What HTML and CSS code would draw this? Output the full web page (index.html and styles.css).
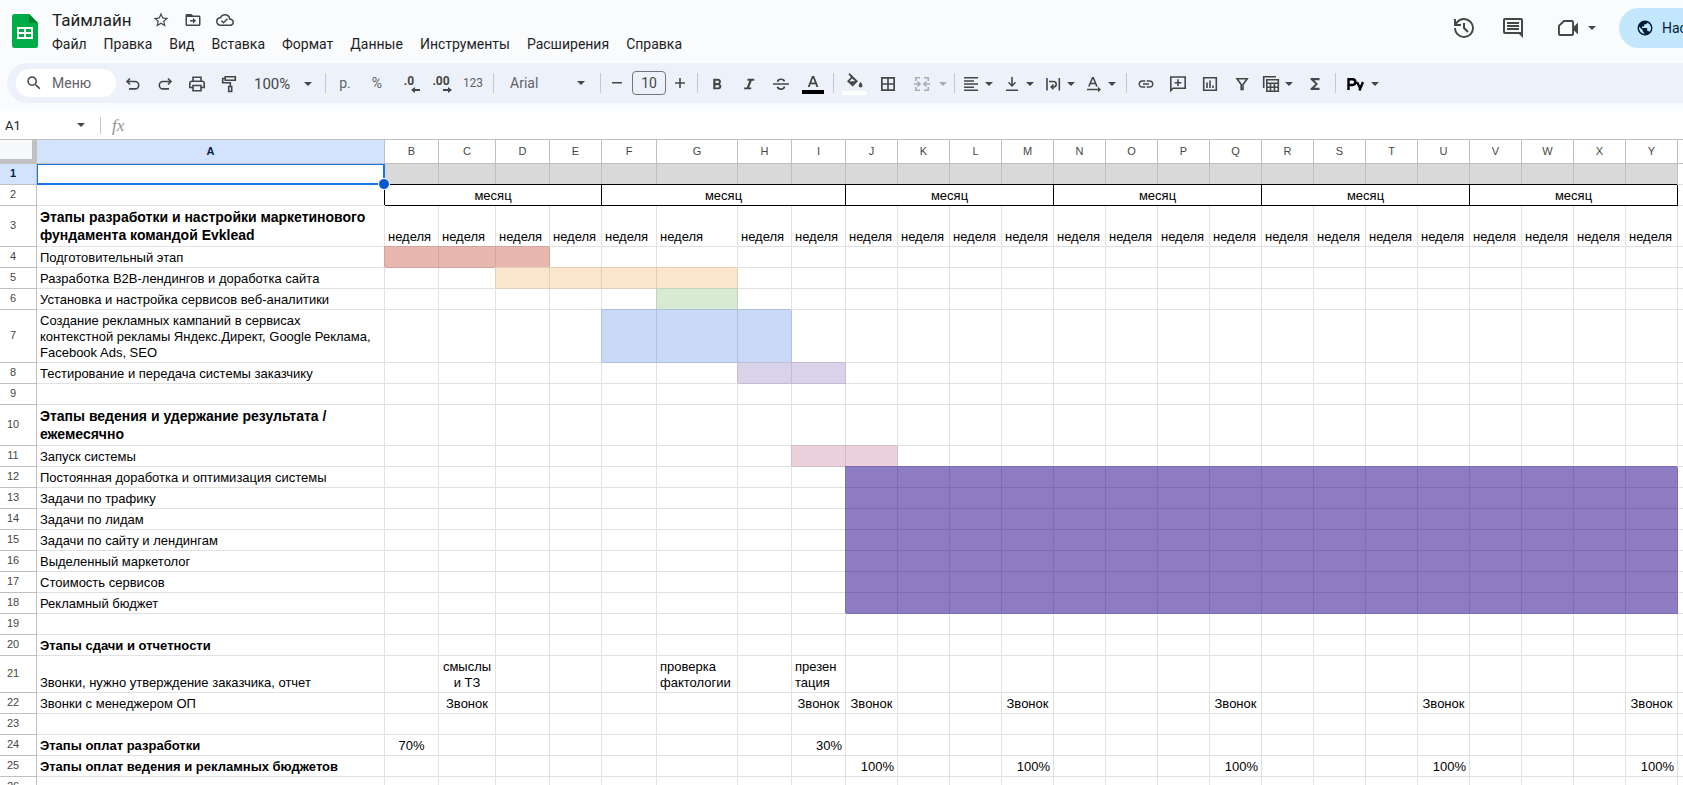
FILE: index.html
```html
<!DOCTYPE html>
<html lang="ru">
<head>
<meta charset="utf-8">
<title>Таймлайн</title>
<link rel="stylesheet" href="styles.css">
</head>
<body>
<div class="app">
  <header class="header">
    <svg class="logo" width="26" height="34" viewBox="0 0 26 34"><path fill="#00ac47" d="M2.500 0H17l9 9v22.500a2.500 2.500 0 0 1-2.500 2.500h-21A2.500 2.500 0 0 1 0 31.500v-29A2.500 2.500 0 0 1 2.500 0z"/><path fill="#00832d" d="M17 0l9 9h-9z"/><path fill="#fff" fill-rule="evenodd" d="M5 13h16v12H5zM7 15v3h5v-3zM14 15v3h5v-3zM7 20v3h5v-3zM14 20v3h5v-3z"/></svg>
    <div class="doc">
      <div class="doc-row">
        <h1 class="title">Таймлайн</h1>
        <button class="doc-btn" aria-label="Пометить"><svg class="i18" viewBox="0 0 24 24"><path d="M22 9.240l-7.190-.62L12 2 9.190 8.630 2 9.240l5.460 4.730L5.820 21 12 17.270 18.180 21l-1.630-7.030L22 9.240zM12 15.400l-3.760 2.270 1-4.280-3.320-2.880 4.380-.38L12 6.100l1.710 4.040 4.380.38-3.320 2.880 1 4.280L12 15.400z"/></svg></button>
        <button class="doc-btn" aria-label="Переместить"><svg class="i18" viewBox="0 0 24 24"><path d="M20 6h-8l-2-2H4c-1.100 0-2 .9-2 2v12c0 1.100.9 2 2 2h16c1.100 0 2-.9 2-2V8c0-1.100-.9-2-2-2zm0 12H4V8h16v10zm-8-1l4-4-4-4v3H8v2h4v3z"/></svg></button>
        <button class="doc-btn" aria-label="Статус документа"><svg class="i18" viewBox="0 0 24 24"><path d="M19.350 10.040A7.490 7.490 0 0 0 12 4C9.110 4 6.600 5.640 5.350 8.040A5.994 5.994 0 0 0 0 14c0 3.310 2.690 6 6 6h13c2.760 0 5-2.240 5-5 0-2.640-2.050-4.780-4.650-4.960zM19 18H6c-2.210 0-4-1.790-4-4 0-2.050 1.530-3.760 3.560-3.970l1.070-.11.5-.95A5.469 5.469 0 0 1 12 6c2.620 0 4.880 1.860 5.390 4.430l.3 1.500 1.530.11A2.980 2.980 0 0 1 22 15c0 1.650-1.350 3-3 3zm-9-3.820l-2.090-2.090L6.500 13.500 10 17l6.010-6.010-1.410-1.410z"/></svg></button>
      </div>
      <nav class="menu">
        <button>Файл</button><button>Правка</button><button>Вид</button><button>Вставка</button><button>Формат</button><button>Данные</button><button>Инструменты</button><button>Расширения</button><button>Справка</button>
      </nav>
    </div>
    <div class="actions">
      <button class="action" aria-label="История"><svg class="i24" viewBox="0 0 24 24"><path d="M12 2a10 10 0 0 0-8 4V3H2v7h7V8H5.080A8 8 0 1 1 4 12H2A10 10 0 1 0 12 2zm-1 5v5.400l4.300 4.300 1.400-1.400-3.700-3.700V7z"/></svg></button>
      <button class="action" aria-label="Комментарии"><svg class="i24" viewBox="0 0 24 24"><path d="M4 2h16a2 2 0 0 1 2 2v18l-4-4H4a2 2 0 0 1-2-2V4c0-1.100.9-2 2-2zm0 2v12h16V4zm2 8h12v2H6zm0-3h12v2H6zm0-3h12v2H6z"/></svg></button>
      <button class="action meet" aria-label="Видеовстреча"><svg class="i24" viewBox="0 0 24 24"><path fill-rule="evenodd" d="M7.500 4H16a2 2 0 0 1 2 2v4.500l4-4v12l-4-4V18a2 2 0 0 1-2 2H4a2 2 0 0 1-2-2V9.500zM8.300 5.900L3.900 10.300v7.800h12.200V5.900z"/></svg><i class="caret"></i></button>
      <div class="share-slot"><button class="share"><svg class="i18" viewBox="0 0 24 24"><path d="M12 2a10 10 0 1 0 0 20 10 10 0 0 0 0-20zm-1 17.930A7.990 7.990 0 0 1 4 12c0-.62.080-1.210.21-1.790L9 15v1c0 1.100.9 2 2 2v1.930zm6.900-2.540A1.990 1.990 0 0 0 16 16h-1v-3c0-.55-.45-1-1-1H8v-2h2c.55 0 1-.45 1-1V7h2c1.100 0 2-.9 2-2v-.41a7.984 7.984 0 0 1 2.900 12.800z"/></svg>Настройки доступа</button></div>
    </div>
  </header>

  <div class="toolbar">
    <label class="search"><svg class="i18" viewBox="0 0 24 24"><path d="M15.500 14h-.79l-.28-.27A6.470 6.470 0 0 0 16 9.500 6.500 6.500 0 1 0 9.500 16c1.610 0 3.090-.59 4.230-1.570l.27.28v.79l5 4.990L20.490 19l-4.990-5zm-6 0C7.010 14 5 11.990 5 9.500S7.010 5 9.500 5 14 7.010 14 9.500 11.990 14 9.500 14z"/></svg><input type="text" placeholder="Меню" aria-label="Меню"></label>
    <button class="tb" aria-label="Отменить"><svg class="i18" viewBox="0 0 18 18"><path d="M6 3.500L3 6.500l3 3M3.500 6.500H11a3.700 3.700 0 0 1 0 7.400H5" class="stroke"/></svg></button>
    <button class="tb" aria-label="Повторить"><svg class="i18" viewBox="0 0 18 18"><path d="M12 3.500l3 3-3 3M14.500 6.500H7a3.700 3.700 0 0 0 0 7.400h6" class="stroke"/></svg></button>
    <button class="tb" aria-label="Печать"><svg class="i18" viewBox="0 0 18 18"><path d="M5 5.700V2.300h8v3.400M4.500 12.500H1.800V8.200a2 2 0 0 1 2-2h10.400a2 2 0 0 1 2 2v4.300h-2.700M5 10.500h8v5.200H5z" class="stroke"/></svg></button>
    <button class="tb" aria-label="Копировать форматирование"><svg class="i18" viewBox="0 0 18 18"><path d="M5.200 1.700h10.100v3.600H5.200zM5 3.500H2.700v4.300h7.600V11M8.700 11.500h3v5h-3z" class="stroke"/></svg></button>
    <button class="zoom">100%<i class="caret"></i></button>
    <span class="sep"></span>
    <button class="tb light">р.</button>
    <button class="tb light">%</button>
    <button class="tb dec">.0<svg width="9" height="6" viewBox="0 0 9 6"><path d="M4 0v2h5v2H4v2L0 3z"/></svg></button>
    <button class="tb dec">.00<svg width="9" height="6" viewBox="0 0 9 6"><path d="M5 0v2H0v2h5v2l4-3z"/></svg></button>
    <button class="tb num">123</button>
    <span class="sep"></span>
    <button class="font">Arial<i class="caret"></i></button>
    <span class="sep"></span>
    <button class="step" aria-label="Уменьшить"><svg width="10" height="10" viewBox="0 0 10 10"><path d="M0 4h10v1.600H0z"/></svg></button>
    <input class="size" value="10" aria-label="Размер шрифта">
    <button class="step" aria-label="Увеличить"><svg width="10" height="10" viewBox="0 0 10 10"><path d="M0 4.200h4.200V0h1.600v4.200H10v1.600H5.800V10H4.200V5.800H0z"/></svg></button>
    <span class="sep"></span>
    <button class="tb" aria-label="Полужирный"><svg class="i18" viewBox="0 0 24 24"><path d="M15.600 11.790c.97-.67 1.650-1.770 1.650-2.790 0-2.260-1.750-4-4-4H7v14h7.040c2.090 0 3.710-1.700 3.710-3.790 0-1.520-.86-2.820-2.150-3.420zM10 7.500h3c.83 0 1.500.67 1.500 1.500s-.67 1.500-1.500 1.500h-3v-3zm3.500 9H10v-3h3.500c.83 0 1.500.67 1.500 1.500s-.67 1.500-1.500 1.500z"/></svg></button>
    <button class="tb" aria-label="Курсив"><svg class="i18" viewBox="0 0 24 24"><path d="M10 5v2.500h2.500L9 16.500H5.500V19H15v-2.500h-2.800l3.500-9H19V5z"/></svg></button>
    <button class="tb" aria-label="Зачеркнутый"><svg class="i18" viewBox="0 0 18 18"><path d="M1 8.200h16v1.600H1zM4.800 6.700c0-2 1.700-3.200 4.200-3.200 2.300 0 3.900 1.100 4.200 2.700l-1.800.4c-.3-.9-1.100-1.500-2.400-1.500-1.300 0-2.200.6-2.200 1.600zM4.600 12l1.800-.4c.3 1.100 1.200 1.700 2.700 1.700 1.400 0 2.300-.6 2.300-1.800h1.900c0 2.200-1.700 3.500-4.200 3.500-2.600 0-4.200-1.200-4.500-3z"/></svg></button>
    <button class="tb" aria-label="Цвет текста"><svg width="24" height="20" viewBox="0 0 24 20"><path d="M11 2h2.200l4.200 11h-2l-1-2.800H9.700l-1 2.800h-2zm-.7 6.600h3.500L12.100 4z"/><path fill="#000" d="M1 16h22v4H1z"/></svg></button>
    <span class="sep"></span>
    <button class="tb wide" aria-label="Цвет заливки"><svg width="24" height="22" viewBox="0 0 24 22"><path d="M6.500 1.200L7.600 0l8.400 8.300-5.300 5.200L5 8.300l3.900-4zM10 5.500L7.300 8.200h6zM18.500 9s2 2.200 2 3.500a1.900 1.900 0 0 1-3.800 0c0-1.300 1.800-3.500 1.800-3.500z"/><path fill="#fff" d="M0 18h24v4H0z"/></svg></button>
    <button class="tb wide" aria-label="Границы"><svg class="i18" viewBox="0 0 18 18"><path fill-rule="evenodd" d="M2 2h14v14H2zM3.700 3.700v4.500h4.500V3.700zM9.800 3.700v4.500h4.500V3.700zM3.700 9.800v4.500h4.500V9.800zM9.800 9.800v4.500h4.500V9.800z"/></svg></button>
    <button class="merge" disabled aria-label="Объединить ячейки"><svg class="i18" viewBox="0 0 18 18"><path d="M7 2.700H2.700V6M11 2.700h4.300V6M7 15.300H2.700V12M11 15.300h4.300V12M1 9h5M4.500 6.500L7 9l-2.500 2.500M17 9h-5M13.500 6.500L11 9l2.500 2.500" class="stroke"/></svg><i class="caret"></i></button>
    <span class="sep"></span>
    <button class="drop" aria-label="Выравнивание по горизонтали"><svg class="i18" viewBox="0 0 18 18"><path d="M2 2h14v1.500H2zM2 5.200h10v1.500H2zM2 8.300h14v1.500H2zM2 11.400h10v1.500H2zM2 14.500h14V16H2z"/></svg><i class="caret"></i></button>
    <button class="drop" aria-label="Выравнивание по вертикали"><svg class="i18" viewBox="0 0 18 18"><path d="M3 14.500h12V16H3zM8.200 2h1.600v7l2.200-2.200 1 1L9 12 5 7.800l1-1L8.200 9z"/></svg><i class="caret"></i></button>
    <button class="drop" aria-label="Перенос текста"><svg class="i18" viewBox="0 0 18 18"><path d="M3 3v12.500M15.300 3v12.500M5 6.500h4.500a2.700 2.700 0 0 1 0 5.400H7.500M9.500 9.500L7.200 11.900l2.300 2.400" class="stroke"/></svg><i class="caret"></i></button>
    <button class="drop" aria-label="Поворот текста"><svg class="i18" viewBox="0 0 18 18"><path d="M7 2h1.800l4 9.500H11l-.9-2.300H5.700l-.9 2.300H3zm-.7 5.700h3.200L7.900 3.800zM2 13.700h11v-2l3 2.800-3 2.800v-2H2z"/></svg><i class="caret"></i></button>
    <span class="sep"></span>
    <button class="tb" aria-label="Ссылка"><svg class="i18" viewBox="0 0 24 24"><path d="M3.900 12c0-1.710 1.390-3.100 3.100-3.100h4V7H7c-2.760 0-5 2.240-5 5s2.240 5 5 5h4v-1.900H7c-1.710 0-3.100-1.390-3.100-3.100zM8 13h8v-2H8v2zm9-6h-4v1.900h4c1.710 0 3.100 1.390 3.100 3.100s-1.390 3.100-3.100 3.100h-4V17h4c2.760 0 5-2.240 5-5s-2.240-5-5-5z"/></svg></button>
    <button class="tb" aria-label="Комментарий"><svg class="i18" viewBox="0 0 18 18"><path d="M1.800 15.500V2h14.400v11.300H4zM9 4.300v6.800M5.600 7.700h6.800" class="stroke"/></svg></button>
    <button class="tb" aria-label="Диаграмма"><svg class="i18" viewBox="0 0 18 18"><path d="M2.700 2.700h12.600v12.600H2.700zM6 7.500V13M9 5.500V13M12 10.500V13" class="stroke"/></svg></button>
    <button class="tb" aria-label="Фильтр"><svg class="i18" viewBox="0 0 18 18"><path d="M4 3.800h10.200L10 9.500V14.500H8.200V9.500z" class="stroke"/></svg></button>
    <button class="drop" aria-label="Таблица"><svg class="i18" viewBox="0 0 18 18"><path d="M1.700 13V1.700H14M4.800 4.700h11.500v11.600H4.800zM5 8.300h11M5 12.300h11M8.500 8.500V16M12.400 8.500V16" class="stroke"/></svg><i class="caret"></i></button>
    <button class="tb" aria-label="Функции"><svg class="i18" viewBox="0 0 24 24"><path d="M18 4H6v2l6.500 6L6 18v2h12v-3h-7l5-5-5-5h7z"/></svg></button>
    <span class="sep"></span>
    <button class="py" aria-label="Python"><svg width="17" height="14" viewBox="0 0 17 14"><path fill="none" stroke="#000" stroke-width="2.400" d="M1.500 13V2.200h4a2.900 2.900 0 0 1 0 5.800h-4M10 5l3 6M16 5l-3.600 8.500"/></svg><i class="caret"></i></button>
  </div>

  <div class="formula">
    <input class="name" value="A1" aria-label="Имя ячейки"><i class="caret"></i>
    <span class="fsep"></span>
    <label class="fx" for="fx">fx</label><input class="fx-input" id="fx">
  </div>

  <table class="sheet" id="sheet"></table>
</div>
<script src="sheet.js"></script>
</body>
</html>
```
FILE: sheet.js
```js
const letters = 'ABCDEFGHIJKLMNOPQRSTUVWXY'.split('');
const widths = [348, 54, 57, 54, 52, 55, 81, 54, 54];

const rows = [
  { fill: ['B', 'Y', 'grey'] },
  { months: true },
  { a: 'Этапы разработки и настройки маркетинового<br>фундамента командой Evklead', cls: 'big', h: 'h41', weeks: true },
  { a: 'Подготовительный этап', fill: ['B', 'D', 'red'] },
  { a: 'Разработка B2B-лендингов и доработка сайта', fill: ['D', 'G', 'orange'] },
  { a: 'Установка и настройка сервисов веб-аналитики', fill: ['G', 'G', 'green'] },
  { a: 'Создание рекламных кампаний в сервисах<br>контекстной рекламы Яндекс.Директ, Google Реклама,<br>Facebook Ads, SEO', h: 'h53', fill: ['F', 'H', 'blue'] },
  { a: 'Тестирование и передача системы заказчику', fill: ['H', 'I', 'lilac'] },
  {},
  { a: 'Этапы ведения и удержание результата /<br>ежемесячно', cls: 'big', h: 'h41' },
  { a: 'Запуск системы', fill: ['I', 'J', 'pink'] },
  { a: 'Постоянная доработка и оптимизация системы', fill: ['J', 'Y', 'violet'] },
  { a: 'Задачи по трафику', fill: ['J', 'Y', 'violet'] },
  { a: 'Задачи по лидам', fill: ['J', 'Y', 'violet'] },
  { a: 'Задачи по сайту и лендингам', fill: ['J', 'Y', 'violet'] },
  { a: 'Выделенный маркетолог', fill: ['J', 'Y', 'violet'] },
  { a: 'Стоимость сервисов', fill: ['J', 'Y', 'violet'] },
  { a: 'Рекламный бюджет', fill: ['J', 'Y', 'violet'] },
  {},
  { a: 'Этапы сдачи и отчетности', cls: 'bold' },
  { a: 'Звонки, нужно утверждение заказчика, отчет', h: 'h37', text: { C: 'смыслы<br>и ТЗ', G: 'проверка<br>фактологии', I: 'презен<br>тация' }, align: { C: 'center' } },
  { a: 'Звонки с менеджером ОП', text: { C: 'Звонок', I: 'Звонок', J: 'Звонок', M: 'Звонок', Q: 'Звонок', U: 'Звонок', Y: 'Звонок' }, all: 'center' },
  {},
  { a: 'Этапы оплат разработки', cls: 'bold', text: { B: '70%', I: '30%' }, align: { B: 'center', I: 'right' } },
  { a: 'Этапы оплат ведения и рекламных бюджетов', cls: 'bold', text: { J: '100%', M: '100%', Q: '100%', U: '100%', Y: '100%' }, all: 'right' },
  {}
];

let html = '<colgroup><col style="width:37px">';
letters.forEach((l, i) => { html += `<col style="width:${widths[i] || 52}px">`; });
html += '<col style="width:100px"></colgroup><thead><tr><th class="corner"></th>';
letters.forEach(l => { html += `<th scope="col"${l === 'A' ? ' class="active"' : ''}>${l}</th>`; });
html += '<th></th></tr></thead><tbody>';

rows.forEach((r, n) => {
  html += `<tr class="${r.h || 'h21'}"><th scope="row"${n === 0 ? ' class="active"' : ''}>${n + 1}</th>`;
  if (n === 0) html += '<td class="selected"><span class="cursor"></span></td>';
  else html += `<td class="${r.cls || ''}">${r.a || ''}</td>`;
  if (r.months) {
    for (let m = 0; m < 6; m++) html += '<td class="month" colspan="4">месяц</td>';
  } else {
    letters.slice(1).forEach(l => {
      const cls = [];
      if (r.fill && l >= r.fill[0] && l <= r.fill[1]) cls.push('fill', r.fill[2]);
      const text = r.weeks ? 'неделя' : (r.text && r.text[l]) || '';
      const align = (r.align && r.align[l]) || (text && r.all);
      if (align) cls.push(align);
      html += `<td class="${cls.join(' ')}">${text}</td>`;
    });
  }
  html += '<td></td></tr>';
});
document.getElementById('sheet').innerHTML = html + '</tbody>';
```
FILE: styles.css
```css
* { box-sizing: border-box; }
html, body { height: 100%; }
body { margin: 0; overflow: hidden; background: #fff; font-family: Roboto, "Liberation Sans", sans-serif; color: #1f1f1f; }
button, input { font: inherit; color: inherit; border: 0; padding: 0; margin: 0; background: none; outline: 0; }
button { display: flex; align-items: center; flex: none; white-space: nowrap; }
svg { display: block; flex: none; fill: #444746; }
.stroke { fill: none; stroke: #444746; stroke-width: 1.6px; }
.i18 { width: 18px; height: 18px; }
.i24 { width: 24px; height: 24px; }
.app { height: 100vh; overflow: hidden; background: #f9fbfd; }
.caret { flex: none; width: 0; height: 0; border: 4px solid transparent; border-top-color: #444746; border-bottom-width: 0; }

.header { display: flex; height: 63px; padding-left: 12px; }
.logo { margin-top: 14px; }
.doc { padding: 7px 0 0 6px; }
.doc-row { display: flex; align-items: center; height: 25px; padding-left: 8px; }
.title { margin: 0 13px 0 0; font-size: 17px; font-weight: 400; line-height: 24px; }
.doc-btn { width: 32px; height: 24px; justify-content: center; }
.menu { display: flex; gap: 1px; font-size: 14px; line-height: 20px; padding-top: 2px; }
.menu button { padding: 0 8px; height: 20px; }
.actions { display: flex; align-items: center; height: 56px; margin-left: auto; }
.action { width: 49px; height: 40px; justify-content: center; }
.meet { width: 82px; gap: 8px; padding-right: 4px; }
.share-slot { width: 64px; }
.share { height: 40px; padding: 0 24px 0 17px; gap: 8px; border-radius: 20px; background: #c2e7ff; color: #001d35; font-size: 14px; }
.share svg { fill: #001d35; }

.toolbar { display: flex; align-items: center; height: 40px; margin-left: 7px; padding-left: 9px; overflow: hidden; background: #edf2fa; border-radius: 20px 0 0 20px; color: #444746; font-size: 14px; }
.search { display: flex; align-items: center; flex: none; width: 100px; height: 28px; margin-right: 1px; padding-left: 9px; gap: 9px; border-radius: 14px; background: #fff; }
.search input { width: 56px; }
.search input::placeholder { color: #5f6368; opacity: 1; }
.tb, .drop, .merge, .py, .zoom { height: 28px; padding-top: 2px; }
.tb { width: 32px; justify-content: center; }
.wide { width: 34px; }
.light, .num { padding-top: 0; color: #5f6368; }
.num { font-size: 12px; }
.dec { position: relative; font-size: 12px; font-weight: 700; padding: 0 0 4px; }
.dec svg { position: absolute; right: 5px; bottom: 4px; }
.zoom { width: 76px; padding-left: 9px; padding-right: 9px; justify-content: space-between; font-size: 15px; }
.font { width: 99px; padding: 0 11px 0 13px; justify-content: space-between; color: #5f6368; }
.sep { flex: none; width: 1px; height: 20px; margin: 0 3px 0 4px; background: #c7c7c7; }
.step { width: 26px; height: 28px; justify-content: center; }
.size { flex: none; width: 34px; height: 24px; margin: 0 1px 0 2px; border: 1px solid #747775; border-radius: 4px; text-align: center; }
.merge { width: 45px; padding-left: 8px; gap: 8px; opacity: .4; }
.drop { width: 41px; padding-left: 4px; gap: 5px; }
.py { width: 48px; padding-left: 8px; gap: 7px; }

.formula { display: flex; align-items: center; height: 28px; margin-top: 8px; background: #fff; font-size: 13px; }
.name { width: 72px; padding-left: 5px; }
.formula .caret { margin: 0 15px 0 5px; }
.fsep { width: 1px; height: 17px; background: #c7c7c7; }
.fx { padding: 2px 8px 0 11px; font: italic 17px "Liberation Serif", serif; color: #8f9193; }
.fx-input { flex: 1; }

.sheet { table-layout: fixed; width: 100%; border-collapse: separate; border-spacing: 0; border-top: 1px solid #c0c0c0; background: #fff; font-family: "Liberation Sans", Arial, sans-serif; font-size: 13px; line-height: 16px; color: #000; }
th { padding: 0 0 2px; border: solid #c0c0c0; border-width: 0 1px 1px 0; font-size: 11px; line-height: 14px; font-weight: 400; color: #444746; background: #fff; vertical-align: middle; }
thead th { height: 24px; }
tbody th { padding-right: 10px; }
th.active { background: #d3e3fd; font-weight: 700; color: #041e49; }
th.corner { background: #f8f9fa; border: solid #c0c0c0; border-width: 0 5px 5px 0; }
td { padding: 0 3px 1px; border: solid #e1e1e1; border-width: 0 1px 1px 0; vertical-align: bottom; white-space: nowrap; overflow: hidden; }
.h21 { height: 21px; }
.h37 { height: 37px; }
.h41 { height: 41px; }
.h53 { height: 53px; }
.bold { font-weight: 700; }
.big { padding-bottom: 2px; font-size: 14px; line-height: 18px; font-weight: 700; }
.center { text-align: center; }
.right { text-align: right; }
.month { text-align: center; border-color: #000; box-shadow: -1px -1px 0 #000; }
.fill { background: var(--bg); border-color: var(--line); box-shadow: -1px -1px 0 var(--line); }
.grey { --bg: #d9d9d9; --line: #c0c0c0; }
.red { --bg: #e6b8af; --line: #cfa59e; }
.orange { --bg: #fce5cd; --line: #e3ceb8; }
.green { --bg: #d9ead3; --line: #c3d2be; }
.blue { --bg: #c9daf8; --line: #b0bfdc; }
.lilac { --bg: #d9d2e9; --line: #c3bdd1; }
.pink { --bg: #ead1dc; --line: #d2bcc6; }
.violet { --bg: #8e7cc3; --line: #7e6db0; }
.selected { position: relative; overflow: visible; z-index: 1; }
.cursor { position: absolute; inset: 0 -1px -1px 0; border: solid #1a73e8; border-width: 1px 2px 2px 1px; }
.cursor::after { content: ""; position: absolute; right: -7px; bottom: -7px; width: 10px; height: 10px; border: 1px solid #fff; border-radius: 50%; background: #0b57d0; }
```
